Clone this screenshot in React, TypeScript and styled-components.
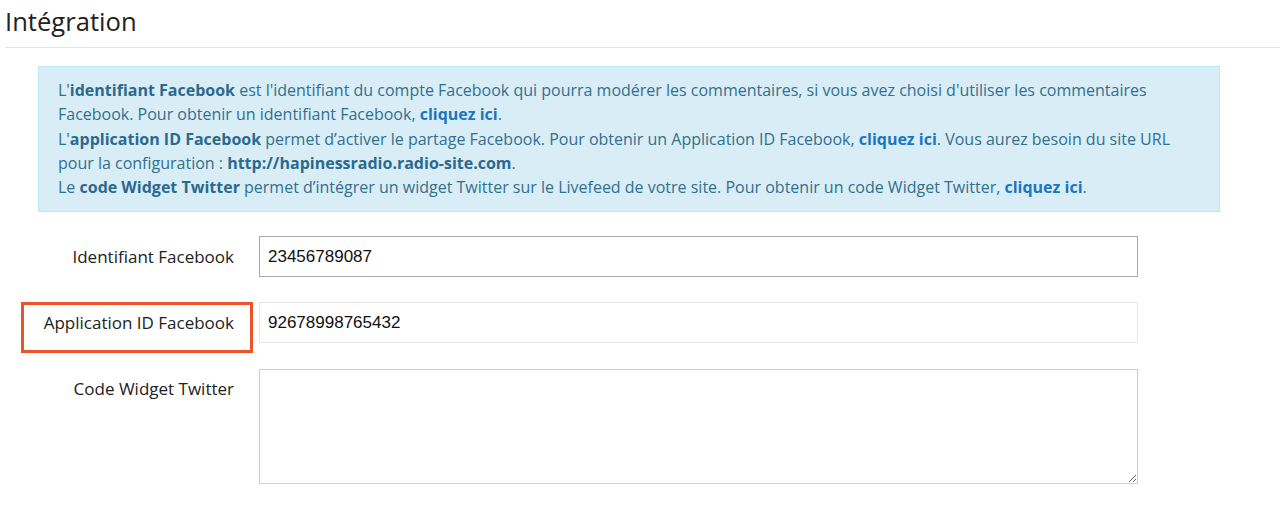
import styled, { createGlobalStyle } from "styled-components";

const GlobalStyle = createGlobalStyle`
  html, body {
    margin: 0;
    padding: 0;
    background: #fff;
    font-family: "Open Sans", "Liberation Sans", sans-serif;
  }
`;

const Page = styled.div`
  padding: 0 0 0 5px;
`;

const Title = styled.h1`
  margin: 0;
  padding: 5px 0 8px 0;
  font-size: 25.6px;
  font-weight: 400;
  line-height: 34px;
  color: #222;
  border-bottom: 1px solid #e5e5e5;
`;

const Content = styled.div`
  padding: 18px 0 0 33px;
  width: 1182px;
`;

const InfoBox = styled.div`
  background: #d9edf7;
  border: 1px solid #bce8f1;
  color: #31708f;
  font-size: 16px;
  line-height: 24.3px;
  padding: 11px 19px 12px 19px;
`;

const Strong = styled.strong`
  font-weight: 700;
  color: #2a6a8e;
`;

const Link = styled.a`
  font-weight: 700;
  color: #1b76bf;
  text-decoration: none;
`;

const Form = styled.div`
  display: grid;
  grid-template-columns: 196px 879px;
  column-gap: 25px;
  row-gap: 25px;
  margin-top: 24px;
`;

const Label = styled.label<{ $highlight?: boolean }>`
  position: relative;
  text-align: right;
  font-size: 17px;
  line-height: 41px;
  color: #222;
  align-self: start;

  ${({ $highlight }) =>
    $highlight &&
    `
    &::after {
      content: "";
      position: absolute;
      left: -17px;
      right: -19px;
      top: 0;
      height: 51px;
      box-sizing: border-box;
      border: 3px solid #ea5428;
      pointer-events: none;
    }
  `}
`;

const Input = styled.input<{ $tone: string }>`
  box-sizing: border-box;
  height: 41px;
  width: 100%;
  margin: 0;
  padding: 0 8px;
  font-family: "Liberation Sans", Arial, sans-serif;
  font-size: 17px;
  color: #111;
  background: #fff;
  border: 1px solid ${({ $tone }) => $tone};
  border-radius: 0;
  outline: none;
`;

const TextArea = styled.textarea`
  box-sizing: border-box;
  display: block;
  height: 115px;
  width: 100%;
  margin: 1px 0 0 0;
  padding: 8px;
  font-family: "Liberation Sans", Arial, sans-serif;
  font-size: 17px;
  border: 1px solid #cfcfcf;
  border-radius: 0;
  outline: none;
`;

export default function App() {
  return (
    <>
      <GlobalStyle />
      <Page>
        <Title>Intégration</Title>
        <Content>
          <InfoBox>
            <div>
              L'<Strong>identifiant Facebook</Strong> est l'identifiant du compte Facebook qui
              pourra modérer les commentaires, si vous avez choisi d'utiliser les commentaires
              <br />
              Facebook. Pour obtenir un identifiant Facebook, <Link href="#">cliquez ici</Link>.
            </div>
            <div>
              L'<Strong>application ID Facebook</Strong> permet d’activer le partage Facebook. Pour
              obtenir un Application ID Facebook, <Link href="#">cliquez ici</Link>. Vous aurez
              besoin du site URL
              <br />
              pour la configuration : <Strong>http://hapinessradio.radio-site.com</Strong>.
            </div>
            <div>
              Le <Strong>code Widget Twitter</Strong> permet d’intégrer un widget Twitter sur le
              Livefeed de votre site. Pour obtenir un code Widget Twitter,{" "}
              <Link href="#">cliquez ici</Link>.
            </div>
          </InfoBox>
          <Form>
            <Label>Identifiant Facebook</Label>
            <Input $tone="#a8a8a8" defaultValue="23456789087" />
            <Label $highlight>Application ID Facebook</Label>
            <Input $tone="#e6e6e6" defaultValue="92678998765432" />
            <Label>Code Widget Twitter</Label>
            <TextArea />
          </Form>
        </Content>
      </Page>
    </>
  );
}
